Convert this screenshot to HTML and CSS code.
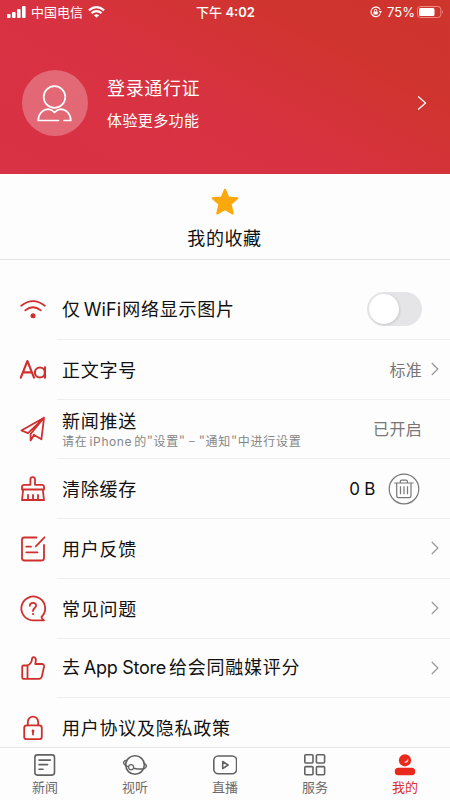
FILE: index.html
```html
<!DOCTYPE html>
<html lang="zh-CN">
<head>
<meta charset="utf-8">
<title>我的</title>
<link rel="stylesheet" href="styles.css">
</head>
<body>
<div class="app">
  <header class="hero">
    <div class="status">
      <div class="status-left">
        <svg width="19" height="12" viewBox="0 0 19 12" fill="#fff"><rect x="0" y="8" width="3.6" height="4" rx="1"/><rect x="5" y="6" width="3.6" height="6" rx="1"/><rect x="10" y="3" width="3.6" height="9" rx="1"/><rect x="15" y="0" width="3.6" height="12" rx="1"/></svg>
        <span class="carrier">中国电信</span>
        <svg width="17" height="12" viewBox="0 0 17 12" fill="none" stroke="#fff" stroke-width="2.2"><path d="M.9 4.3Q8.5-2 16.1 4.3M3.5 7.2Q8.5 3 13.5 7.2"/><path d="M8.5 11.7 5.9 9.2Q8.5 7.3 11.1 9.2Z" fill="#fff" stroke="none"/></svg>
      </div>
      <div class="status-time">下午<span class="lat"> 4:02</span></div>
      <div class="status-right">
        <svg width="12" height="12" viewBox="0 0 12 12" fill="none" stroke="#fff"><path d="M10.3 7.6A4.8 4.8 0 1 1 10.2 3.9" stroke-width="1.2"/><path d="M8.7 5.1h3.3l-1.6 2.3z" fill="#fff" stroke="none"/><rect x="3.5" y="5.4" width="4.2" height="3.2" rx=".6" fill="#fff" stroke="none"/><path d="M4.4 5.6V4.5a1.2 1.2 0 0 1 2.4 0v1.1"/></svg>
        <span class="lat percent">75%</span>
        <svg width="27" height="12" viewBox="0 0 27 12"><rect x=".5" y=".5" width="23.3" height="11" rx="3" fill="none" stroke="#f08884"/><rect x="2" y="2" width="15.5" height="8" rx="1.5" fill="#fff"/><path d="M25 4q1.6 2 0 4z" fill="#f3a3a0"/></svg>
      </div>
    </div>
    <div class="profile">
      <div class="avatar">
        <svg width="36" height="38" viewBox="0 0 36 38" fill="none" stroke="#fff" stroke-width="1.7" stroke-linecap="round" stroke-linejoin="round"><circle cx="17.500" cy="13" r="10.8"/><path d="M21.500 36.500H1.200C1.200 30 5.500 25.500 11.800 25.200Q15 25.800 17.500 28.500Q20 25.800 23.200 25.200C29.500 25.500 33.800 30 33.800 36.500H27"/></svg>
      </div>
      <div class="who"><div class="login">登录通行证</div><div class="more">体验更多功能</div></div>
      <svg class="hero-arrow" width="10" height="16" viewBox="0 0 10 16" fill="none" stroke="#fff" stroke-width="1.3"><path d="M1.2 1.6 8.5 8 1.2 14.4"/></svg>
    </div>
  </header>

  <section class="favorites">
    <svg width="28" height="28" viewBox="0 0 28 28" fill="#faa80c" stroke="#faa80c" stroke-width="2" stroke-linejoin="round"><path d="M14 1.7 17.4 9.6 26.4 10.3 19.6 16.1 21.8 25.5 14 21.2 6.2 25.5 8.4 16.1 1.6 10.3 10.6 9.6Z"/></svg>
    <span>我的收藏</span>
  </section>

  <main class="list">
    <div class="row">
      <svg class="ico" viewBox="0 0 26 26"><path d="M1.2 8.8Q13-.6 24.8 8.8M5.2 13.4Q13 7 20.8 13.4"/><circle cx="13" cy="18.8" r="2.5" class="solid"/></svg>
      <div class="body"><span class="label">仅<span class="lat wifi">WiFi</span>网络显示图片</span><span class="switch"><i></i></span></div>
    </div>
    <div class="row">
      <svg class="ico letters" viewBox="0 0 26 26"><path d="M.8 20.700 7.400 4 14 20.700M3.200 15.400H11.800"/><circle cx="19.900" cy="15.500" r="5"/><path d="M25 10.400V20.700"/></svg>
      <div class="body"><span class="label">正文字号</span><span class="value">标准</span><svg class="arrow" viewBox="0 0 8 14"><path d="M.8 1 6.9 7 .8 13"/></svg></div>
    </div>
    <div class="row">
      <svg class="ico" viewBox="0 0 26 26"><path d="M24 1.8 1.4 14.5 8 17.2 24 1.8 21.4 23.3 13.6 18.8M24 1.8 10.6 18V24.4L14.2 18.8"/></svg>
      <div class="body"><div class="label stack"><span>新闻推送</span><small>请在<span class="lat phone">iPhone</span>的"设置"<b>−</b>"通知"中进行设置</small></div><span class="value push">已开启</span></div>
    </div>
    <div class="row">
      <svg class="ico" viewBox="0 0 26 26"><path d="M10.4 8.800V3.400a2.300 2.300 0 0 1 4.600 0V8.800M10.400 8.800H4a2 2 0 0 0-2 2V13.500H24V10.800a2 2 0 0 0-2-2H15M3.200 13.500 2 24H24L22.800 13.500M8 23.600V19M13 23.600V19M18 23.600V19"/></svg>
      <div class="body"><span class="label">清除缓存</span><span class="lat size">0 B</span>
      <svg class="trash" viewBox="0 0 32 32"><circle cx="16" cy="16" r="14.8"/><path d="M6.3 10H25.5M8.7 10V22.5q0 2.2 2 2.2H21q2 0 2-2.2V10M12.3 10V8.6q0-1.4 1.4-1.4H18q1.4 0 1.4 1.4V10M12.5 13.3V21.3M16 13.3V21.3M19.5 13.3V21.3"/></svg></div>
    </div>
    <div class="row">
      <svg class="ico" viewBox="0 0 26 26"><path d="M16.5 1.500H4.500A2.500 2.500 0 0 0 2 4V22A2.500 2.500 0 0 0 4.500 24.500H21.500A2.500 2.500 0 0 0 24 22V9M24.500 1.300 15.800 10.300M6.300 10.700H11M6.300 16.300H17.500"/></svg>
      <div class="body"><span class="label">用户反馈</span><svg class="arrow" viewBox="0 0 8 14"><path d="M.8 1 6.900 7 .8 13"/></svg></div>
    </div>
    <div class="row">
      <svg class="ico" viewBox="0 0 26 26"><path d="M24 24.300H13A11.900 11.900 0 1 1 21.500 21Q22 23.400 24 24.300"/><path d="M9.800 9.800C9.800 5.600 16.400 6 16.100 9.800C15.900 12.100 13 12.100 13 15"/><circle cx="13" cy="18" r="1.100" class="solid"/></svg>
      <div class="body"><span class="label">常见问题</span><svg class="arrow" viewBox="0 0 8 14"><path d="M.8 1 6.900 7 .8 13"/></svg></div>
    </div>
    <div class="row">
      <svg class="ico" viewBox="0 0 26 26"><path d="M7.500 10.500V23.800H3.500q-1.300 0-1.300-1.300V11.800q0-1.300 1.300-1.300ZM7.500 10.500Q11.800 8.300 12 4C12 1.200 15.800 1.400 15.900 5.100L15.300 9H21.600q2.700 0 2.400 2.700L21.900 21.400q-.5 2.400-2.900 2.400H7.500"/></svg>
      <div class="body"><span class="label">去<span class="lat store">App Store</span>给会同融媒评分</span><svg class="arrow" viewBox="0 0 8 14"><path d="M.8 1 6.900 7 .8 13"/></svg></div>
    </div>
    <div class="row">
      <svg class="ico" viewBox="0 0 26 26"><path d="M7.800 10.400V6.900a5.200 5.200 0 0 1 10.400 0V10.400"/><rect x="4.200" y="10.400" width="17.600" height="13.800" rx="2.500"/><circle cx="13" cy="16" r="1.400" class="solid"/><path d="M13 16V19.500"/></svg>
      <div class="body"><span class="label">用户协议及隐私政策</span></div>
    </div>
  </main>

  <nav class="tabs">
    <div class="tab"><svg viewBox="0 0 24 24"><rect x="1.900" y="1.900" width="19.600" height="20.200" rx="2.500"/><path d="M6 7.100H17.500M6 11.600H14.600M6 16.200H10"/></svg><span>新闻</span></div>
    <div class="tab"><svg viewBox="0 0 24 24"><circle cx="12" cy="12" r="9.300"/><path d="M3.600 7.200Q-.9 8.500 1.300 11.200Q3.200 13 5.400 13.800M10.600 15.200Q15 16.300 20.500 16M21.200 10.400Q24.200 12 23 14Q22.200 15.600 20.500 16" stroke-width="1.400"/><circle cx="8.100" cy="14.200" r="2.500" class="planet"/></svg><span>视听</span></div>
    <div class="tab"><svg viewBox="0 0 24 24"><rect x=".8" y="3" width="22.800" height="17.800" rx="4.500"/><path d="M9.700 8.500V15.600L15.100 12Z" stroke-linejoin="round"/></svg><span>直播</span></div>
    <div class="tab"><svg viewBox="0 0 24 24"><rect x="1.800" y="1.800" width="8.200" height="8.200" rx="1"/><rect x="13.400" y="1.800" width="8.200" height="8.200" rx="1"/><rect x="1.800" y="13.600" width="8.200" height="8.200" rx="1"/><rect x="13.400" y="13.600" width="8.200" height="8.200" rx="1"/></svg><span>服务</span></div>
    <div class="tab active"><svg viewBox="0 0 24 24"><circle cx="12" cy="7.300" r="6.100"/><rect x="1.800" y="14.700" width="20.400" height="7.500" rx="3.500"/><path d="M12.200 9.200Q14.300 9 14.800 7" class="shine"/></svg><span>我的</span></div>
  </nav>
</div>
</body>
</html>
```
FILE: styles.css
```css
* { box-sizing: border-box; }
body { margin: 0; background: #fdfdfd; color: #111; font-family: "Noto Sans CJK SC", sans-serif; }
svg { display: block; flex: none; }
.lat { font-family: Inter, "Liberation Sans", sans-serif; white-space: pre; }
.app { width: 450px; height: 800px; overflow: hidden; display: flex; flex-direction: column; }

.hero { height: 174px; flex: none; color: #fff; background: linear-gradient(28deg, #d93145 0%, #d83242 42%, #d0342e 76%, #cd352d 100%); }
.status { height: 24px; padding: 0 6px 0 7px; display: grid; grid-template-columns: 1fr auto 1fr; align-items: center; line-height: 20px; }
.status-left, .status-right { display: flex; align-items: center; }
.status-right { justify-content: flex-end; }
.carrier { font-size: 13px; margin: 0 5px 0 5px; }
.status-time { font-size: 13px; font-weight: 500; }
.status-time .lat { font-weight: 600; }
.percent { font-size: 13px; margin: 0 2px 0 5px; }
.profile { height: 66px; margin-top: 46px; padding: 0 23px 0 22px; display: flex; align-items: center; }
.avatar { width: 66px; height: 66px; border-radius: 50%; background: rgba(255,255,255,.27); display: flex; align-items: center; justify-content: center; }
.who { margin-left: 19px; flex: 1; }
.login { font-size: 18px; line-height: 28px; letter-spacing: .65px; margin-top: -2px; }
.more { font-size: 15px; line-height: 24px; margin-top: 7px; letter-spacing: .4px; }

.favorites { height: 86px; flex: none; border-bottom: 1px solid #e6e6e6; display: flex; flex-direction: column; align-items: center; padding-top: 14px; font-size: 18px; letter-spacing: .6px; }
.favorites span { line-height: 28px; margin-top: 7px; margin-right: 1px; }

.list { height: 487px; flex: none; overflow: hidden; padding-top: 20px; }
.row { height: 59.75px; padding-left: 20px; display: flex; align-items: center; }
.ico { width: 26px; height: 26px; fill: none; stroke: #cf302d; stroke-width: 1.8; stroke-linecap: round; stroke-linejoin: round; overflow: visible; }
.ico .solid { fill: #cf302d; stroke: none; }
.letters { stroke-width: 2.1; }
.body { flex: 1; height: 100%; margin-left: 11px; padding: 0 11px 0 5px; border-bottom: 1px solid #eee; display: flex; align-items: center; }
.label { flex: 1; font-size: 18px; line-height: 26px; letter-spacing: .75px; white-space: nowrap; padding-bottom: 1px; }
.wifi { margin: 0 1px 0 3px; letter-spacing: .1px; }
.store { margin: 0 3px; letter-spacing: -.25px; }
.stack { display: flex; flex-direction: column; }
.stack small { font-size: 12px; line-height: 16px; color: #858585; letter-spacing: .8px; }
.stack b { font-weight: 400; margin: 0 3px; }
.phone { margin: 0 2px; letter-spacing: .6px; }
.value { font-size: 16px; color: #777; letter-spacing: .3px; margin-right: 9px; padding-bottom: 1px; }
.push { margin-right: 17px; }
.size { font-size: 17px; margin-right: 13px; letter-spacing: -.3px; }
.arrow { width: 8px; height: 14px; fill: none; stroke: #999; stroke-width: 1.2; }
.trash { width: 32px; height: 32px; margin-right: 19px; fill: none; stroke: #777; stroke-width: 1.2; }
.switch { width: 55px; height: 34px; margin-right: 17px; border-radius: 17px; background: #e5e5e7; padding: 2px; }
.switch i { display: block; width: 30px; height: 30px; border-radius: 50%; background: #fff; box-shadow: 1px 1px 3px rgba(0,0,0,.12); }

.tabs { height: 53px; flex: none; border-top: 1px solid #e7e7e7; background: #fdfdfd; display: flex; }
.tab { flex: 1; display: flex; flex-direction: column; align-items: center; padding-top: 5px; font-size: 13px; color: #6b6b6b; }
.tab span { line-height: 20px; }
.tab svg { width: 24px; height: 24px; fill: none; stroke: #626262; stroke-width: 1.6; stroke-linecap: round; }
.tab .planet { fill: #fdfdfd; stroke-width: 1.2; }
.active { color: #d93025; }
.tab.active svg { fill: #e8291c; stroke: none; }
.tab.active .shine { fill: none; stroke: #ffd2c8; stroke-width: 1.4; }
```
